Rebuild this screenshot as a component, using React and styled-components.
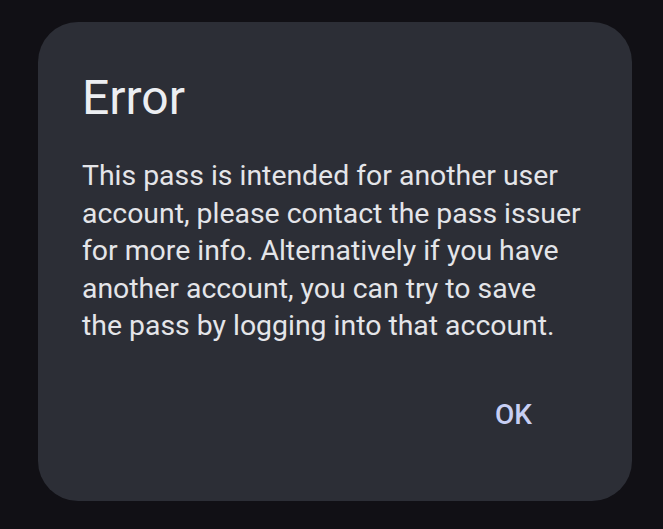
import React from 'react'
import styled, { createGlobalStyle } from 'styled-components'

const GlobalStyle = createGlobalStyle`
  html, body {
    margin: 0;
    padding: 0;
    background: #111015;
  }
  body {
    font-family: Roboto, 'Noto Sans', sans-serif;
    -webkit-font-smoothing: antialiased;
  }
`

const Screen = styled.div`
  width: 663px;
  height: 529px;
  box-sizing: border-box;
  padding: 22px 31px 0 38px;
  background: #111015;
`

const Dialog = styled.div`
  width: 594px;
  height: 479px;
  box-sizing: border-box;
  padding: 48px 44px 0 44px;
  background: #2c2e36;
  border-radius: 40px;
  display: flex;
  flex-direction: column;
`

const Title = styled.h1`
  margin: 0;
  font-size: 48px;
  line-height: 56px;
  font-weight: 400;
  color: #eceef2;
`

const Message = styled.p`
  margin: 31px 0 0 0;
  font-size: 28.4px;
  line-height: 37.5px;
  font-weight: 400;
  color: #e4e5e9;
  white-space: nowrap;
`

const Actions = styled.div`
  display: flex;
  justify-content: flex-end;
  margin-top: 53px;
  padding-right: 56px;
`

const TextButton = styled.button`
  background: none;
  border: none;
  padding: 0;
  font-family: inherit;
  font-size: 28px;
  line-height: 34px;
  font-weight: 500;
  color: #c7cff4;
  cursor: pointer;
`

const lines = [
  'This pass is intended for another user',
  'account, please contact the pass issuer',
  'for more info. Alternatively if you have',
  'another account, you can try to save',
  'the pass by logging into that account.',
]

export default function App() {
  return (
    <>
      <GlobalStyle />
      <Screen>
        <Dialog>
          <Title>Error</Title>
          <Message>
            {lines.map((line, i) => (
              <React.Fragment key={i}>
                {line}
                {i < lines.length - 1 && <br />}
              </React.Fragment>
            ))}
          </Message>
          <Actions>
            <TextButton>OK</TextButton>
          </Actions>
        </Dialog>
      </Screen>
    </>
  )
}
